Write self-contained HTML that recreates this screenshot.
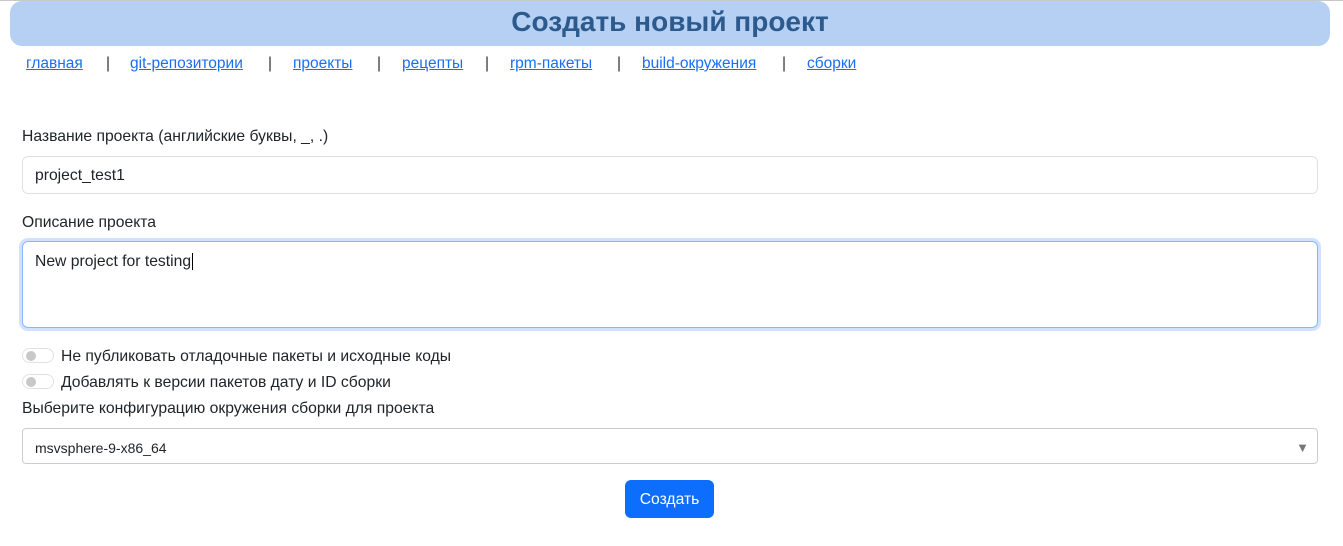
<!DOCTYPE html>
<html><head><meta charset="utf-8"><style>
body{margin:0;width:1343px;height:546px;background:#fff;font-family:"Liberation Sans",sans-serif;color:#212529;position:relative;overflow:hidden}
.top{position:absolute;left:0;top:0;width:1343px;height:1px;background:#c8c8c8}
.hdr{position:absolute;left:10px;top:1px;width:1320px;height:45px;background:#b6d0f4;border-radius:12px;text-align:center;font-weight:bold;font-size:28px;line-height:42px;color:#2c5a8c}
.nav{position:absolute;top:55px;left:26px;font-size:15.5px;white-space:nowrap}
.nav a{color:#1a6ff0;text-decoration:underline;position:absolute}
.nav span{position:absolute;color:#333}
.lbl{position:absolute;left:22px;font-size:15.7px}
.inp{position:absolute;left:22px;width:1296px;box-sizing:border-box;border:1px solid #dee2e6;border-radius:6px;font-size:15.7px;padding-left:12px}
.tg{position:absolute;left:22px;width:32px;height:15px;border:1px solid #dee2e6;border-radius:8px;box-sizing:border-box}
.tg:before{content:"";position:absolute;left:3px;top:2px;width:10px;height:10px;border-radius:50%;background:#c8c8c8}
</style></head><body>
<div class="top"></div>
<div class="hdr">Создать новый проект</div>
<div class="nav">
<a style="left:0">главная</a><span style="left:80px">|</span>
<a style="left:104px">git-репозитории</a><span style="left:242px">|</span>
<a style="left:267px">проекты</a><span style="left:351px">|</span>
<a style="left:376px">рецепты</a><span style="left:459px">|</span>
<a style="left:484px">rpm-пакеты</a><span style="left:591px">|</span>
<a style="left:616px">build-окружения</a><span style="left:756px">|</span>
<a style="left:781px">сборки</a>
</div>
<div class="lbl" style="top:128px">Название проекта (английские буквы, _, .)</div>
<div class="inp" style="top:156px;height:38px;line-height:38px">project_test1</div>
<div class="lbl" style="top:214px">Описание проекта</div>
<div class="inp" style="top:241px;height:87px;border:1px solid #86b7fe;box-shadow:0 0 0 3px #cfe2ff;padding-top:10px;line-height:20px">New project for testing<span style="border-left:1px solid #000;margin-left:1px"></span></div>
<div class="tg" style="top:348px"></div><div class="lbl" style="left:61px;top:348px">Не публиковать отладочные пакеты и исходные коды</div>
<div class="tg" style="top:374px"></div><div class="lbl" style="left:61px;top:374px">Добавлять к версии пакетов дату и ID сборки</div>
<div class="lbl" style="top:400px">Выберите конфигурацию окружения сборки для проекта</div>
<div class="inp" style="top:428px;height:36px;line-height:38px;font-size:14px;border-color:#ccc;border-radius:4px">msvsphere-9-x86_64<span style="position:absolute;right:8px;color:#777;font-size:13px">▼</span></div>
<div style="position:absolute;left:625px;top:480px;width:89px;height:38px;background:#0d6efd;color:#fff;border-radius:6px;font-size:15.7px;text-align:center;line-height:39px">Создать</div>
</body></html>
